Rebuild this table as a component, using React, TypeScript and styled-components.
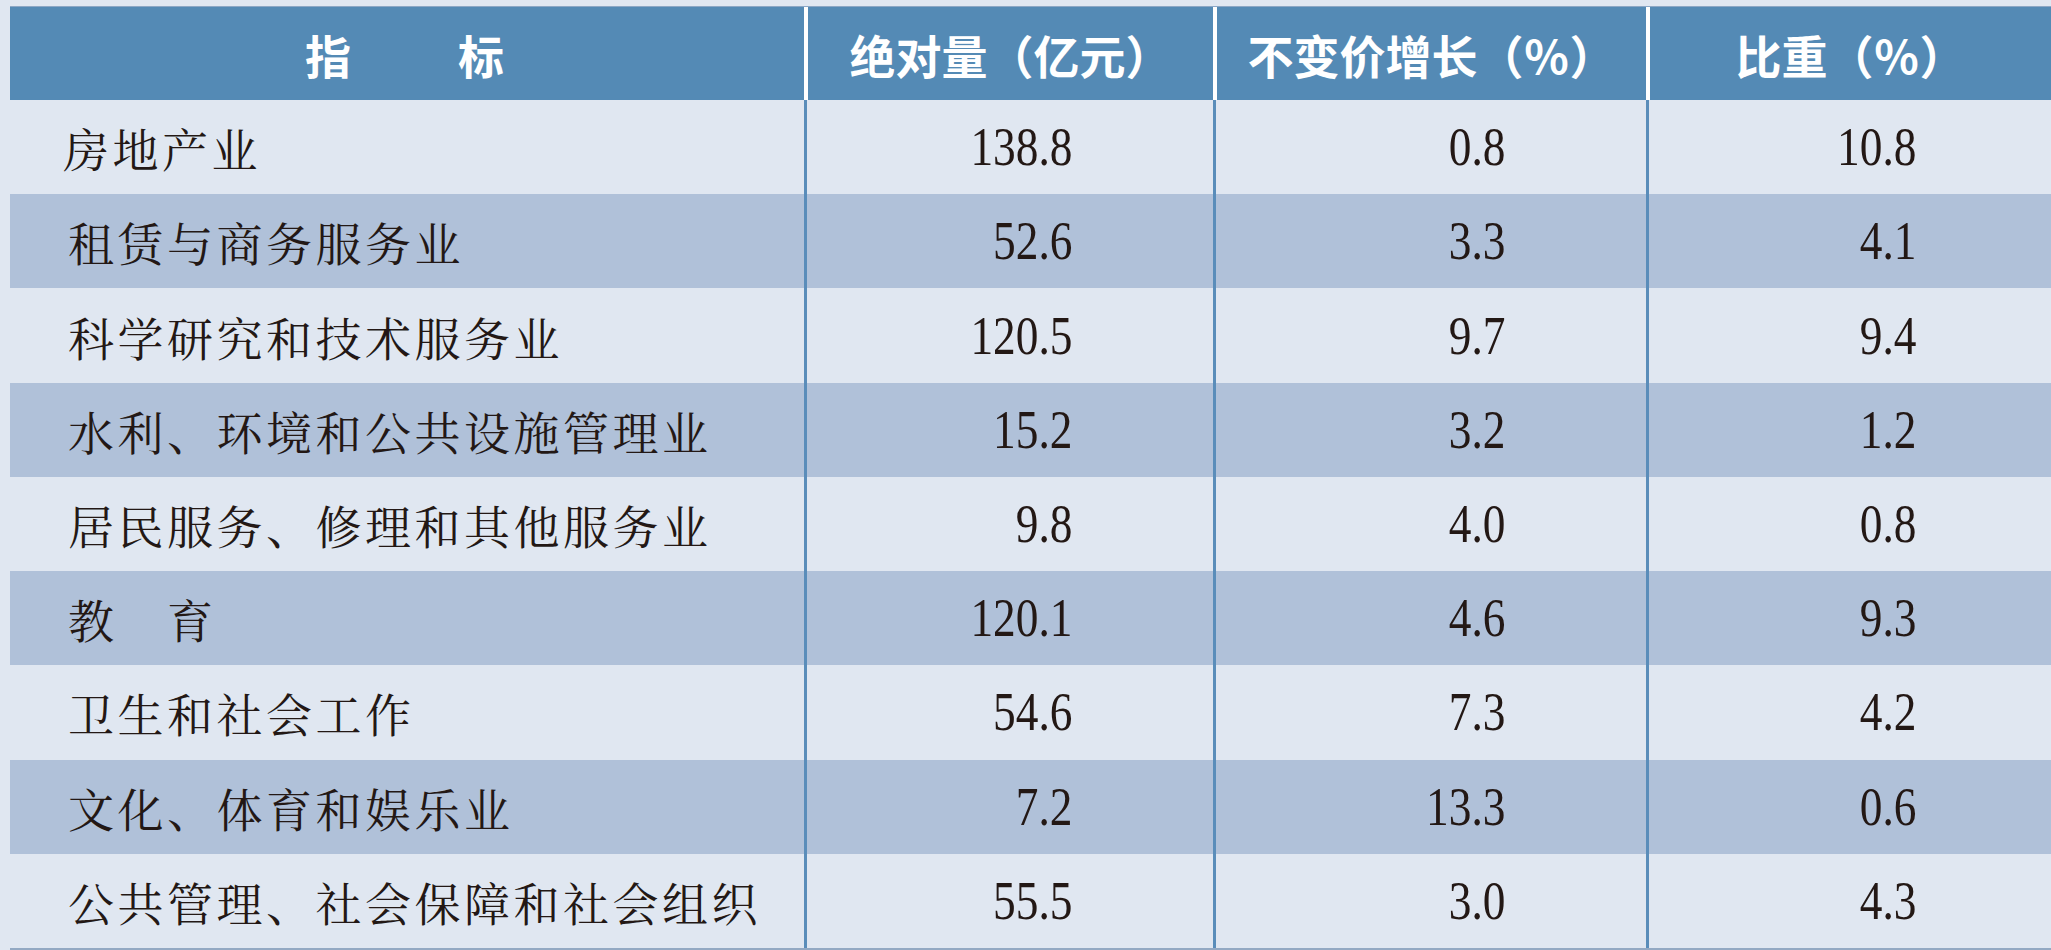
import React from 'react';
import styled, { createGlobalStyle } from 'styled-components';

const GlobalStyle = createGlobalStyle`
  html, body {
    margin: 0;
    padding: 0;
    background: #e0e7f1;
    overflow: hidden;
  }
`;

const COLS = '794px 409px 433px 1fr';

const Page = styled.div`
  width: 2051px;
  height: 950px;
  box-sizing: border-box;
  padding: 6px 0 0 10px;
  background: #e0e7f1;
  overflow: hidden;
`;

const Table = styled.div`
  display: flex;
  flex-direction: column;
  border-top: 1px solid #8ca7c5;
  border-bottom: 2px solid #93a9c3;
`;

const HeaderRow = styled.div`
  display: grid;
  grid-template-columns: ${COLS};
  height: 93px;
  background: #548ab5;
`;

const HeaderCell = styled.div<{ $first?: boolean; $spacing: number }>`
  display: flex;
  align-items: center;
  justify-content: center;
  border-left: ${(p) => (p.$first ? 'none' : '4px solid #ffffff')};
  color: #ffffff;
  font-family: "Noto Sans CJK SC", "Noto Sans", sans-serif;
  font-weight: 700;
  font-size: 46px;
  letter-spacing: ${(p) => p.$spacing}px;
  white-space: pre;
`;

const Row = styled.div<{ $dark: boolean }>`
  display: grid;
  grid-template-columns: ${COLS};
  height: 94.22px;
  background: ${(p) => (p.$dark ? '#b0c1d9' : '#e0e7f1')};
`;

const NameCell = styled.div<{ $indent: number }>`
  display: flex;
  align-items: center;
  padding-left: ${(p) => p.$indent}px;
  color: #231815;
  font-family: "Noto Serif CJK SC", "Noto Sans CJK SC", serif;
  font-size: 46px;
  letter-spacing: 3.5px;
  white-space: pre;
`;

const NumCell = styled.div<{ $right: number }>`
  display: flex;
  align-items: center;
  justify-content: flex-end;
  padding-right: ${(p) => p.$right}px;
  border-left: 3px solid #5a8dba;
`;

const Num = styled.span`
  display: inline-block;
  color: #231815;
  font-family: "Liberation Serif", "Times New Roman", serif;
  font-size: 54px;
  line-height: 1;
  transform: scaleX(0.84);
  transform-origin: right center;
`;

type RowData = { name: string; abs: string; growth: string; share: string; indent?: number };

const rows: RowData[] = [
  { name: '房地产业', abs: '138.8', growth: '0.8', share: '10.8', indent: 53 },
  { name: '租赁与商务服务业', abs: '52.6', growth: '3.3', share: '4.1' },
  { name: '科学研究和技术服务业', abs: '120.5', growth: '9.7', share: '9.4' },
  { name: '水利、环境和公共设施管理业', abs: '15.2', growth: '3.2', share: '1.2' },
  { name: '居民服务、修理和其他服务业', abs: '9.8', growth: '4.0', share: '0.8' },
  { name: '教　育', abs: '120.1', growth: '4.6', share: '9.3' },
  { name: '卫生和社会工作', abs: '54.6', growth: '7.3', share: '4.2' },
  { name: '文化、体育和娱乐业', abs: '7.2', growth: '13.3', share: '0.6' },
  { name: '公共管理、社会保障和社会组织', abs: '55.5', growth: '3.0', share: '4.3' },
];

export default function App() {
  return (
    <>
      <GlobalStyle />
      <Page>
        <Table>
          <HeaderRow>
            <HeaderCell $first $spacing={5}>指　　标</HeaderCell>
            <HeaderCell $spacing={0}>绝对量（亿元）</HeaderCell>
            <HeaderCell $spacing={0}>不变价增长（％）</HeaderCell>
            <HeaderCell $spacing={0}>比重（％）</HeaderCell>
          </HeaderRow>
          {rows.map((r, i) => (
            <Row key={r.name} $dark={i % 2 === 1}>
              <NameCell $indent={r.indent ?? 58}>{r.name}</NameCell>
              <NumCell $right={141}>
                <Num>{r.abs}</Num>
              </NumCell>
              <NumCell $right={141}>
                <Num>{r.growth}</Num>
              </NumCell>
              <NumCell $right={135}>
                <Num>{r.share}</Num>
              </NumCell>
            </Row>
          ))}
        </Table>
      </Page>
    </>
  );
}
